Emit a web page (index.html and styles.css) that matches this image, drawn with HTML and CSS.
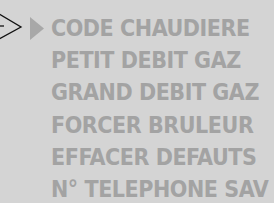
FILE: index.html
```html
<!DOCTYPE html>
<html>
<head>
<meta charset="utf-8">
<link rel="stylesheet" href="styles.css">
</head>
<body>
<div class="menu">
  <div class="row">
    <div class="mark">
      <svg width="51" height="32" viewBox="0 0 51 32">
        <polyline points="-1,2 21,15 -1,27" fill="none" stroke="#111" stroke-width="1.3"/>
        <line x1="0" y1="14" x2="4" y2="14" stroke="#111" stroke-width="1.3"/>
        <polygon points="30,5 44,16.5 30,28" fill="#a8a8a8"/>
      </svg>
    </div>
    <span class="label">CODE CHAUDIERE</span>
  </div>
  <div class="row"><div class="mark"></div><span class="label">PETIT DEBIT GAZ</span></div>
  <div class="row"><div class="mark"></div><span class="label">GRAND DEBIT GAZ</span></div>
  <div class="row"><div class="mark"></div><span class="label">FORCER BRULEUR</span></div>
  <div class="row"><div class="mark"></div><span class="label">EFFACER DEFAUTS</span></div>
  <div class="row"><div class="mark"></div><span class="label">N° TELEPHONE SAV</span></div>
</div>
</body>
</html>
```
FILE: styles.css
```css
html, body {
  margin: 0;
  padding: 0;
  background: #d4d4d4;
  overflow: hidden;
}
.menu {
  padding-top: 12px;
  font-family: "DejaVu Sans Condensed", "DejaVu Sans", sans-serif;
  font-stretch: condensed;
  font-weight: bold;
  font-size: 23px;
  letter-spacing: -0.45px;
  line-height: 32.2px;
  color: #a3a3a3;
}
.row {
  display: flex;
  align-items: center;
  height: 32.2px;
  white-space: nowrap;
}
.mark {
  width: 51px;
  flex: none;
  height: 32px;
}
.mark svg {
  display: block;
}
```
